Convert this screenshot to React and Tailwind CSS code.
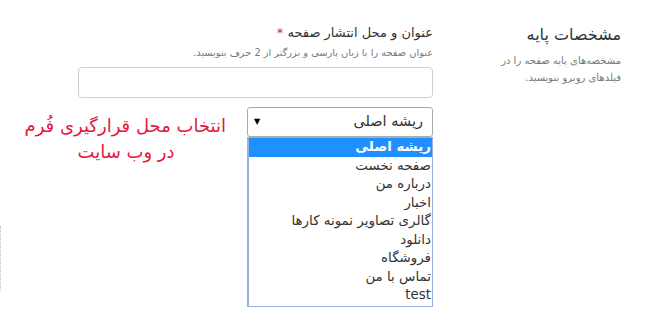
import React from "react";

const options = [
  "ریشه اصلی",
  "صفحه نخست",
  "درباره من",
  "اخبار",
  "گالری تصاویر نمونه کارها",
  "دانلود",
  "فروشگاه",
  "تماس با من",
  "test",
];

export default function App() {
  return (
    <div
      dir="rtl"
      className="relative w-[650px] h-[325px] bg-white overflow-hidden flex text-[#333]"
      style={{ fontFamily: '"DejaVu Sans", sans-serif' }}
    >
      <aside className="w-[217px] shrink-0 pr-[29px] pt-[24px]">
        <h2 className="text-[16px] leading-[22px] text-[#333]">مشخصات پایه</h2>
        <p className="mt-[6px] text-[10px] leading-[17px] text-[#777] w-[130px]">
          مشخصه‌های پایه صفحه را در فیلدهای روبرو بنویسید.
        </p>
      </aside>
      <main className="w-[433px] shrink-0 pt-[23px]">
        <label className="block text-[13px] leading-[20px] text-[#333]">
          عنوان و محل انتشار صفحه <span className="text-[#e4183d]">*</span>
        </label>
        <p className="text-[9.8px] leading-[18px] mt-[1px] text-[#777]">
          عنوان صفحه را با زبان پارسی و بزرگتر از 2 حرف بنویسید.
        </p>
        <div className="mt-[5px] w-[355px] h-[31px] border border-[#cfcfcf] rounded-[4px]" />
        <div className="mt-[9px] flex items-start">
          <div className="w-[186px] shrink-0">
            <div className="h-[30px] border border-[#a9a9a9] rounded-[3px] flex items-center justify-between pr-[9px] pl-[6px]">
              <span className="text-[14.5px]">ریشه اصلی</span>
              <span className="text-[8px] text-black">▼</span>
            </div>
            <div className="w-[186px] border border-[#94b3e2] border-l-2 pb-[1px]">
              {options.map((o, i) => (
                <div
                  key={o}
                  className={
                    "h-[18.5px] leading-[18.5px] pr-[1px] text-[13.4px] whitespace-nowrap " +
                    (i === 0 ? "bg-[#1e90ff] text-white font-bold" : "text-[#333]")
                  }
                >
                  {o}
                </div>
              ))}
            </div>
          </div>
          <div className="w-[200px] shrink-0 mr-[21px] mt-[6px] text-center text-[18px] leading-[26px] text-[#e4183d]">
            <div className="whitespace-nowrap">انتخاب محل قرارگیری فُرم</div>
            <div>در وب سایت</div>
          </div>
        </div>
      </main>
      <div className="absolute left-0 top-[226px] h-[64px] border-l border-dotted border-[#bbb]" />
    </div>
  );
}
